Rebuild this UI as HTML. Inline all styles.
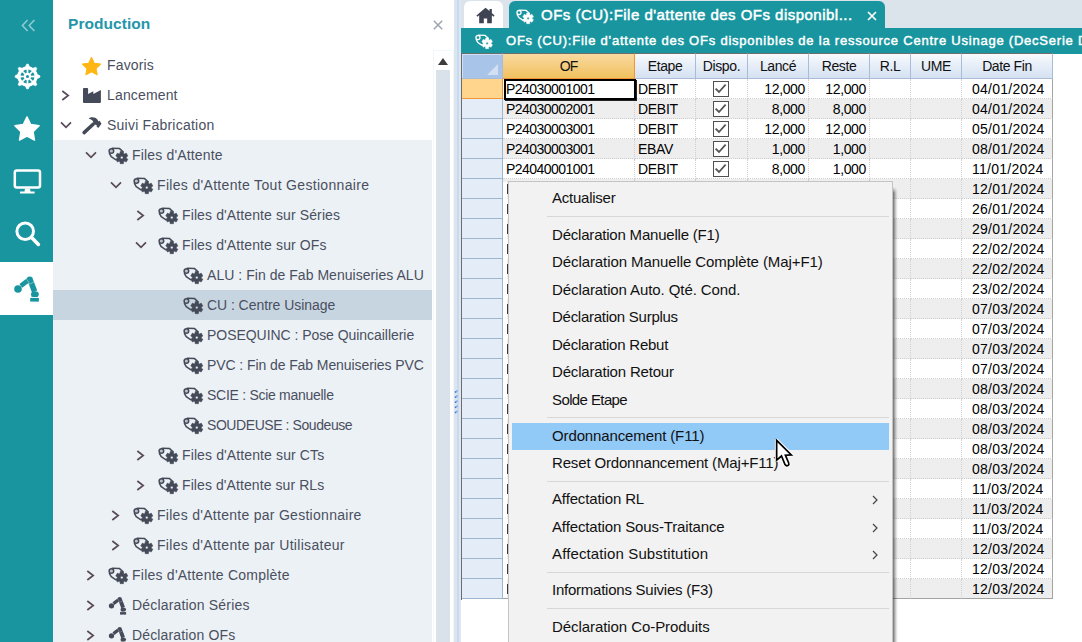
<!DOCTYPE html>
<html>
<head>
<meta charset="utf-8">
<title>Production</title>
<style>
*{box-sizing:border-box;margin:0;padding:0}
html,body{width:1082px;height:642px;overflow:hidden;background:#fff;font-family:"Liberation Sans",sans-serif}
body{position:relative}
.abs{position:absolute}
svg{position:absolute;overflow:visible}
#bar{left:0;top:0;width:53px;height:642px;background:#1995a0}
#bar .act{left:0;top:262px;width:54px;height:53px;background:#fff}
#panel{left:53px;top:0;width:401px;height:642px;background:#fff}
#ptitle{left:15px;top:15px;font-size:15.5px;font-weight:700;color:#2595a9;letter-spacing:.05px;line-height:18px}
#tree{left:0;top:50px;width:380px;height:592px}
.tr{position:absolute;left:0;width:379px;height:30px;font-size:14px;color:#4a4f5f;line-height:30px;white-space:nowrap}
.tr.sub{background:#ecf1f5}
.tr.sel{background:#c7d5e1}
.tr span{position:absolute;top:0}
#sb{left:380px;top:50px;width:21px;height:592px;background:#fff;border:1px solid #f3f6fa;border-bottom:0}
#sb .th{left:2px;top:19px;width:14px;height:572px;background:#d9e1ea}
#sb .up{left:4px;top:7px;width:0;height:0;border-left:5px solid transparent;border-right:5px solid transparent;border-bottom:7px solid #3c3c3c}
#split{left:454px;top:0;width:7px;height:642px;background:linear-gradient(90deg,#dde5ec 0,#dde5ec 3.4px,#c5daf6 3.4px,#c5daf6 5.2px,#dfe6ee 5.2px)}
#main{left:461px;top:0;width:621px;height:642px;background:#fff}
#tabs{left:0;top:0;width:621px;height:28px;background:#dbe3eb}
#home{left:3px;top:1px;width:39px;height:27px;background:#fff;border-radius:6px 6px 0 0}
#tab{left:48px;top:1px;width:376px;height:27px;background:#1995a0;border-radius:6px 6px 0 0;color:#fff;font-size:15px;font-weight:400;-webkit-text-stroke:.5px #fff;letter-spacing:.48px;line-height:27px;white-space:nowrap}
#tab span{position:absolute;left:32px;top:0}
#tbar{left:0;top:28px;width:621px;height:26px;background:#1995a0;color:#fff;font-size:13px;font-weight:400;-webkit-text-stroke:.45px #fff;letter-spacing:.775px;line-height:25px;white-space:nowrap;overflow:hidden}
#tbar span{position:absolute;left:45px;top:0}
#grid{left:0;top:53px;width:592px;height:547px;border-left:1px solid #6d6d6d}
.hd{position:absolute;top:0;height:26px;border-top:1px solid #6d6d6d;border-right:1px solid #a9bbd6;border-bottom:1px solid #a9bbd6;background:linear-gradient(#f9fbfd,#e4ecf7 55%,#d5e1f2);font-size:14px;letter-spacing:-.4px;color:#111;text-align:center;line-height:24px}
.hd.or{background:linear-gradient(#f9d99f,#f1c15f);border-bottom:1px solid #f29536;border-right:1px solid #f29536;border-top:1px solid #6d6d6d}
.hd.cn{background:#a9c4e9;box-shadow:inset 1px 1px 0 #d0dff3}
.row{position:absolute;left:41px;width:550px;height:20px;font-size:14px;color:#000;line-height:20px;white-space:nowrap}
.row.alt{background:#eeeeee}
.row i{position:absolute;top:0;height:20px;border-right:1px dotted #cfcfcf;border-bottom:1px dotted #cfcfcf;font-style:normal;overflow:hidden}
.row i.r{text-align:right}
.row i.last{border-right:1px solid #a3a3a3}
.row.end i{border-bottom:1px solid #a3a3a3}
.rh{position:absolute;left:0;width:41px;height:20px;background:#e4ecf7;border-right:1px solid #9eb6ce;border-bottom:1px solid #9eb6ce}
.rh.cur{background:#ffd58d;border-color:#f29536}
.cb{position:absolute;left:17px;top:2px;width:16px;height:16px;border:1.5px solid #505050;background:#fff}
#menu{left:508px;top:181px;width:385px;height:470px;background:#f2f2f2;border:1px solid #c4c4c4;font-size:15px;color:#111;letter-spacing:-.05px}
.mi{position:absolute;left:3px;width:377px;height:27px;line-height:26px;padding-left:40px;white-space:nowrap}
.mi.hl{background:#91c9f7}
.ms{position:absolute;left:38px;width:342px;height:1px;background:#d7d7d7}
</style>
</head>
<body>
<div id="bar" class="abs"><div class="act abs"></div>
<svg style="left:20.8px;top:19px" width="15" height="13" viewBox="0 0 15 13"><path d="M6.6 1 L1.4 6.5 L6.6 12 M13.4 1 L8.2 6.5 L13.4 12" fill="none" stroke="#8ccbd2" stroke-width="1.6"/></svg>
<svg style="left:14.8px;top:63.9px" width="25" height="25" viewBox="0 0 25 25"><g fill="none" stroke="#fff"><circle cx="12.5" cy="12.5" r="8.6" stroke-width="3.2"/><circle cx="12.5" cy="12.5" r="2.6" stroke-width="2.2"/><path d="M12.50 16.10 L12.50 21.00" stroke-width="1.7"/><path d="M10.30 22.10 L11.75 25.00 L13.25 25.00 L14.70 22.10z" fill="#fff" stroke-width=".5" stroke-linejoin="round"/><path d="M9.95 15.05 L6.49 18.51" stroke-width="1.7"/><path d="M4.16 17.73 L3.13 20.81 L4.19 21.87 L7.27 20.84z" fill="#fff" stroke-width=".5" stroke-linejoin="round"/><path d="M8.90 12.50 L4.00 12.50" stroke-width="1.7"/><path d="M2.90 10.30 L-0.00 11.75 L0.00 13.25 L2.90 14.70z" fill="#fff" stroke-width=".5" stroke-linejoin="round"/><path d="M9.95 9.95 L6.49 6.49" stroke-width="1.7"/><path d="M7.27 4.16 L4.19 3.13 L3.13 4.19 L4.16 7.27z" fill="#fff" stroke-width=".5" stroke-linejoin="round"/><path d="M12.50 8.90 L12.50 4.00" stroke-width="1.7"/><path d="M14.70 2.90 L13.25 -0.00 L11.75 0.00 L10.30 2.90z" fill="#fff" stroke-width=".5" stroke-linejoin="round"/><path d="M15.05 9.95 L18.51 6.49" stroke-width="1.7"/><path d="M20.84 7.27 L21.87 4.19 L20.81 3.13 L17.73 4.16z" fill="#fff" stroke-width=".5" stroke-linejoin="round"/><path d="M16.10 12.50 L21.00 12.50" stroke-width="1.7"/><path d="M22.10 14.70 L25.00 13.25 L25.00 11.75 L22.10 10.30z" fill="#fff" stroke-width=".5" stroke-linejoin="round"/><path d="M15.05 15.05 L18.51 18.51" stroke-width="1.7"/><path d="M17.73 20.84 L20.81 21.87 L21.87 20.81 L20.84 17.73z" fill="#fff" stroke-width=".5" stroke-linejoin="round"/></g></svg>
<svg style="left:13.4px;top:115.3px" width="28" height="28" viewBox="0 0 24 24"><path d="M12 1.6l3.2 6.6 7.2 1-5.2 5.1 1.25 7.2L12 18.1l-6.45 3.4L6.8 14.3 1.6 9.2l7.2-1z" fill="#fff" stroke="#fff" stroke-width="1.2" stroke-linejoin="round"/></svg>
<svg style="left:13px;top:168px" width="29" height="26" viewBox="0 0 29 26"><rect x="1.8" y="2.6" width="25.2" height="16.8" rx="2" fill="none" stroke="#fff" stroke-width="2.5"/><path d="M12 20.4 h5 l.5 3.2 h-6z M7 23.4 h14.6 v2 h-14.6z" fill="#fff"/></svg>
<svg style="left:14.6px;top:221.4px" width="25" height="25" viewBox="0 0 25 25"><circle cx="10.2" cy="10.2" r="8.3" fill="none" stroke="#fff" stroke-width="3"/><path d="M16.6 16.6 L23.4 23.4" stroke="#fff" stroke-width="3.6" stroke-linecap="round"/></svg>
<svg style="left:13px;top:275px" width="27.0" height="27.0" viewBox="0 0 27 27">
<circle cx="5" cy="14" r="3.8" fill="#1995a0"/>
<path d="M7.8 10.9 L16 4.7" stroke="#1995a0" stroke-width="4.6" fill="none"/>
<circle cx="16.8" cy="4.7" r="3.1" fill="#1995a0"/>
<path d="M17.4 5.6 L21.6 16.6" stroke="#1995a0" stroke-width="5.6" fill="none"/>
<ellipse cx="21.9" cy="19.2" rx="3.9" ry="2.9" fill="#1995a0"/>
<rect x="17.2" y="23" width="8.7" height="3.6" fill="#1995a0"/>
<rect x="18.2" y="20.6" width="6.8" height="1.6" fill="#1995a0" opacity=".55"/>
<path d="M13.2 3.4 L16.6 8.6 M16.4 9.4 L21.4 6.6" stroke="#fff" stroke-width=".7" opacity=".55" fill="none"/>
</svg>
</div>
<div id="panel" class="abs">
<div id="ptitle" class="abs">Production</div>
<svg style="left:380px;top:20px" width="10" height="10" viewBox="0 0 10 10"><path d="M.8 .8 L9.2 9.2 M9.2 .8 L.8 9.2" stroke="#9da5b0" stroke-width="1.5" fill="none"/></svg>
<div id="tree" class="abs">
<div class="tr " style="top:0px"><svg style="left:28.4px;top:5.6px" width="21" height="21" viewBox="0 0 24 24"><path d="M12 1.6l3.2 6.6 7.2 1-5.2 5.1 1.25 7.2L12 18.1l-6.45 3.4L6.8 14.3 1.6 9.2l7.2-1z" fill="#ffb612" stroke="#ffb612" stroke-width="1.2" stroke-linejoin="round"/></svg><span style="left:54px;letter-spacing:0.149px">Favoris</span></div>
<div class="tr " style="top:30px"><svg style="left:8px;top:9.5px" width="9" height="11" viewBox="0 0 9 11"><path d="M1.3 1.0 L7.2 5.5 L1.3 10.0" fill="none" stroke="#5a4a5a" stroke-width="1.7"/></svg><svg style="left:29.7px;top:7.8px" width="18" height="15" viewBox="0 0 18 15"><path d="M0 .9 Q0 0 .9 0 H4.2 Q5.1 0 5.1 .9 V6 L10.3 3.3 V5.9 L17.9 2 V14 Q17.9 15 16.9 15 H1 Q0 15 0 14z" fill="#454a58"/></svg><span style="left:54px;letter-spacing:0.152px">Lancement</span></div>
<div class="tr " style="top:60px"><svg style="left:7px;top:10.5px" width="12" height="8" viewBox="0 0 12 8"><path d="M1 1.3 L6 6.4 L11 1.3" fill="none" stroke="#5a4a5a" stroke-width="1.7"/></svg><svg style="left:28.8px;top:6.8px" width="20" height="18" viewBox="0 0 20 18"><path d="M6.6 1.4 C9 -0.5 13.2 -0.3 15.4 2.4 L16.5 4.4 L17.6 3.8 L19.5 6.7 L16.3 10.9 L14.4 9.2 L14.9 8 L13.3 7.8 L11.4 5.7 C11.5 3.9 9.6 2 6.6 1.4z" fill="#454a58"/><path d="M11.4 7 L2.1 15.6" stroke="#454a58" stroke-width="3.5" stroke-linecap="round"/></svg><span style="left:54px;letter-spacing:0.231px">Suivi Fabrication</span></div>
<div class="tr sub" style="top:90px"><svg style="left:32px;top:10.5px" width="12" height="8" viewBox="0 0 12 8"><path d="M1 1.3 L6 6.4 L11 1.3" fill="none" stroke="#5a4a5a" stroke-width="1.7"/></svg><svg style="left:55px;top:6.5px" width="21.0" height="17.5" viewBox="0 0 21 17.5">
<g fill="none" stroke="#454a58" stroke-width="1.5" stroke-linecap="round" stroke-linejoin="round">
<circle cx="3.4" cy="4" r="2.3" fill="#b9c0ca"/><path d="M4.2 1.2 L11.6 1.6 L14.8 4.6"/><path d="M1.4 6.4 L3.2 9.6 L7.6 12.6"/></g>
<path fill="#454a58" fill-rule="evenodd" stroke="#454a58" stroke-width=".5" stroke-linejoin="round" d="M12.01 6.36 L12.12 4.53 L15.48 4.53 L15.59 6.36 L16.57 6.93 L18.22 6.11 L19.90 9.02 L18.36 10.03 L18.36 11.17 L19.90 12.18 L18.22 15.09 L16.57 14.27 L15.59 14.84 L15.48 16.67 L12.12 16.67 L12.01 14.84 L11.03 14.27 L9.38 15.09 L7.70 12.18 L9.24 11.17 L9.24 10.03 L7.70 9.02 L9.38 6.11 L11.03 6.93z M12.45 10.60 a1.35 1.35 0 1 0 2.7 0 a1.35 1.35 0 1 0 -2.7 0z"/>
</svg><span style="left:79px;letter-spacing:0.166px">Files d'Attente</span></div>
<div class="tr sub" style="top:120px"><svg style="left:57px;top:10.5px" width="12" height="8" viewBox="0 0 12 8"><path d="M1 1.3 L6 6.4 L11 1.3" fill="none" stroke="#5a4a5a" stroke-width="1.7"/></svg><svg style="left:80px;top:6.5px" width="21.0" height="17.5" viewBox="0 0 21 17.5">
<g fill="none" stroke="#454a58" stroke-width="1.5" stroke-linecap="round" stroke-linejoin="round">
<circle cx="3.4" cy="4" r="2.3" fill="#b9c0ca"/><path d="M4.2 1.2 L11.6 1.6 L14.8 4.6"/><path d="M1.4 6.4 L3.2 9.6 L7.6 12.6"/></g>
<path fill="#454a58" fill-rule="evenodd" stroke="#454a58" stroke-width=".5" stroke-linejoin="round" d="M12.01 6.36 L12.12 4.53 L15.48 4.53 L15.59 6.36 L16.57 6.93 L18.22 6.11 L19.90 9.02 L18.36 10.03 L18.36 11.17 L19.90 12.18 L18.22 15.09 L16.57 14.27 L15.59 14.84 L15.48 16.67 L12.12 16.67 L12.01 14.84 L11.03 14.27 L9.38 15.09 L7.70 12.18 L9.24 11.17 L9.24 10.03 L7.70 9.02 L9.38 6.11 L11.03 6.93z M12.45 10.60 a1.35 1.35 0 1 0 2.7 0 a1.35 1.35 0 1 0 -2.7 0z"/>
</svg><span style="left:104px;letter-spacing:0.324px">Files d'Attente Tout Gestionnaire</span></div>
<div class="tr sub" style="top:150px"><svg style="left:83px;top:9.5px" width="9" height="11" viewBox="0 0 9 11"><path d="M1.3 1.0 L7.2 5.5 L1.3 10.0" fill="none" stroke="#5a4a5a" stroke-width="1.7"/></svg><svg style="left:105px;top:6.5px" width="21.0" height="17.5" viewBox="0 0 21 17.5">
<g fill="none" stroke="#454a58" stroke-width="1.5" stroke-linecap="round" stroke-linejoin="round">
<circle cx="3.4" cy="4" r="2.3" fill="#b9c0ca"/><path d="M4.2 1.2 L11.6 1.6 L14.8 4.6"/><path d="M1.4 6.4 L3.2 9.6 L7.6 12.6"/></g>
<path fill="#454a58" fill-rule="evenodd" stroke="#454a58" stroke-width=".5" stroke-linejoin="round" d="M12.01 6.36 L12.12 4.53 L15.48 4.53 L15.59 6.36 L16.57 6.93 L18.22 6.11 L19.90 9.02 L18.36 10.03 L18.36 11.17 L19.90 12.18 L18.22 15.09 L16.57 14.27 L15.59 14.84 L15.48 16.67 L12.12 16.67 L12.01 14.84 L11.03 14.27 L9.38 15.09 L7.70 12.18 L9.24 11.17 L9.24 10.03 L7.70 9.02 L9.38 6.11 L11.03 6.93z M12.45 10.60 a1.35 1.35 0 1 0 2.7 0 a1.35 1.35 0 1 0 -2.7 0z"/>
</svg><span style="left:129px;letter-spacing:0.113px">Files d'Attente sur Séries</span></div>
<div class="tr sub" style="top:180px"><svg style="left:82px;top:10.5px" width="12" height="8" viewBox="0 0 12 8"><path d="M1 1.3 L6 6.4 L11 1.3" fill="none" stroke="#5a4a5a" stroke-width="1.7"/></svg><svg style="left:105px;top:6.5px" width="21.0" height="17.5" viewBox="0 0 21 17.5">
<g fill="none" stroke="#454a58" stroke-width="1.5" stroke-linecap="round" stroke-linejoin="round">
<circle cx="3.4" cy="4" r="2.3" fill="#b9c0ca"/><path d="M4.2 1.2 L11.6 1.6 L14.8 4.6"/><path d="M1.4 6.4 L3.2 9.6 L7.6 12.6"/></g>
<path fill="#454a58" fill-rule="evenodd" stroke="#454a58" stroke-width=".5" stroke-linejoin="round" d="M12.01 6.36 L12.12 4.53 L15.48 4.53 L15.59 6.36 L16.57 6.93 L18.22 6.11 L19.90 9.02 L18.36 10.03 L18.36 11.17 L19.90 12.18 L18.22 15.09 L16.57 14.27 L15.59 14.84 L15.48 16.67 L12.12 16.67 L12.01 14.84 L11.03 14.27 L9.38 15.09 L7.70 12.18 L9.24 11.17 L9.24 10.03 L7.70 9.02 L9.38 6.11 L11.03 6.93z M12.45 10.60 a1.35 1.35 0 1 0 2.7 0 a1.35 1.35 0 1 0 -2.7 0z"/>
</svg><span style="left:129px;letter-spacing:0.116px">Files d'Attente sur OFs</span></div>
<div class="tr sub" style="top:210px"><svg style="left:130px;top:6.5px" width="21.0" height="17.5" viewBox="0 0 21 17.5">
<g fill="none" stroke="#454a58" stroke-width="1.5" stroke-linecap="round" stroke-linejoin="round">
<circle cx="3.4" cy="4" r="2.3" fill="#b9c0ca"/><path d="M4.2 1.2 L11.6 1.6 L14.8 4.6"/><path d="M1.4 6.4 L3.2 9.6 L7.6 12.6"/></g>
<path fill="#454a58" fill-rule="evenodd" stroke="#454a58" stroke-width=".5" stroke-linejoin="round" d="M12.01 6.36 L12.12 4.53 L15.48 4.53 L15.59 6.36 L16.57 6.93 L18.22 6.11 L19.90 9.02 L18.36 10.03 L18.36 11.17 L19.90 12.18 L18.22 15.09 L16.57 14.27 L15.59 14.84 L15.48 16.67 L12.12 16.67 L12.01 14.84 L11.03 14.27 L9.38 15.09 L7.70 12.18 L9.24 11.17 L9.24 10.03 L7.70 9.02 L9.38 6.11 L11.03 6.93z M12.45 10.60 a1.35 1.35 0 1 0 2.7 0 a1.35 1.35 0 1 0 -2.7 0z"/>
</svg><span style="left:154px;letter-spacing:0.04px">ALU : Fin de Fab Menuiseries ALU</span></div>
<div class="tr sel" style="top:240px"><svg style="left:130px;top:6.5px" width="21.0" height="17.5" viewBox="0 0 21 17.5">
<g fill="none" stroke="#454a58" stroke-width="1.5" stroke-linecap="round" stroke-linejoin="round">
<circle cx="3.4" cy="4" r="2.3" fill="#b9c0ca"/><path d="M4.2 1.2 L11.6 1.6 L14.8 4.6"/><path d="M1.4 6.4 L3.2 9.6 L7.6 12.6"/></g>
<path fill="#454a58" fill-rule="evenodd" stroke="#454a58" stroke-width=".5" stroke-linejoin="round" d="M12.01 6.36 L12.12 4.53 L15.48 4.53 L15.59 6.36 L16.57 6.93 L18.22 6.11 L19.90 9.02 L18.36 10.03 L18.36 11.17 L19.90 12.18 L18.22 15.09 L16.57 14.27 L15.59 14.84 L15.48 16.67 L12.12 16.67 L12.01 14.84 L11.03 14.27 L9.38 15.09 L7.70 12.18 L9.24 11.17 L9.24 10.03 L7.70 9.02 L9.38 6.11 L11.03 6.93z M12.45 10.60 a1.35 1.35 0 1 0 2.7 0 a1.35 1.35 0 1 0 -2.7 0z"/>
</svg><span style="left:154px;letter-spacing:-0.054px">CU : Centre Usinage</span></div>
<div class="tr sub" style="top:270px"><svg style="left:130px;top:6.5px" width="21.0" height="17.5" viewBox="0 0 21 17.5">
<g fill="none" stroke="#454a58" stroke-width="1.5" stroke-linecap="round" stroke-linejoin="round">
<circle cx="3.4" cy="4" r="2.3" fill="#b9c0ca"/><path d="M4.2 1.2 L11.6 1.6 L14.8 4.6"/><path d="M1.4 6.4 L3.2 9.6 L7.6 12.6"/></g>
<path fill="#454a58" fill-rule="evenodd" stroke="#454a58" stroke-width=".5" stroke-linejoin="round" d="M12.01 6.36 L12.12 4.53 L15.48 4.53 L15.59 6.36 L16.57 6.93 L18.22 6.11 L19.90 9.02 L18.36 10.03 L18.36 11.17 L19.90 12.18 L18.22 15.09 L16.57 14.27 L15.59 14.84 L15.48 16.67 L12.12 16.67 L12.01 14.84 L11.03 14.27 L9.38 15.09 L7.70 12.18 L9.24 11.17 L9.24 10.03 L7.70 9.02 L9.38 6.11 L11.03 6.93z M12.45 10.60 a1.35 1.35 0 1 0 2.7 0 a1.35 1.35 0 1 0 -2.7 0z"/>
</svg><span style="left:154px;letter-spacing:-0.046px">POSEQUINC : Pose Quincaillerie</span></div>
<div class="tr sub" style="top:300px"><svg style="left:130px;top:6.5px" width="21.0" height="17.5" viewBox="0 0 21 17.5">
<g fill="none" stroke="#454a58" stroke-width="1.5" stroke-linecap="round" stroke-linejoin="round">
<circle cx="3.4" cy="4" r="2.3" fill="#b9c0ca"/><path d="M4.2 1.2 L11.6 1.6 L14.8 4.6"/><path d="M1.4 6.4 L3.2 9.6 L7.6 12.6"/></g>
<path fill="#454a58" fill-rule="evenodd" stroke="#454a58" stroke-width=".5" stroke-linejoin="round" d="M12.01 6.36 L12.12 4.53 L15.48 4.53 L15.59 6.36 L16.57 6.93 L18.22 6.11 L19.90 9.02 L18.36 10.03 L18.36 11.17 L19.90 12.18 L18.22 15.09 L16.57 14.27 L15.59 14.84 L15.48 16.67 L12.12 16.67 L12.01 14.84 L11.03 14.27 L9.38 15.09 L7.70 12.18 L9.24 11.17 L9.24 10.03 L7.70 9.02 L9.38 6.11 L11.03 6.93z M12.45 10.60 a1.35 1.35 0 1 0 2.7 0 a1.35 1.35 0 1 0 -2.7 0z"/>
</svg><span style="left:154px;letter-spacing:-0.085px">PVC : Fin de Fab Menuiseries PVC</span></div>
<div class="tr sub" style="top:330px"><svg style="left:130px;top:6.5px" width="21.0" height="17.5" viewBox="0 0 21 17.5">
<g fill="none" stroke="#454a58" stroke-width="1.5" stroke-linecap="round" stroke-linejoin="round">
<circle cx="3.4" cy="4" r="2.3" fill="#b9c0ca"/><path d="M4.2 1.2 L11.6 1.6 L14.8 4.6"/><path d="M1.4 6.4 L3.2 9.6 L7.6 12.6"/></g>
<path fill="#454a58" fill-rule="evenodd" stroke="#454a58" stroke-width=".5" stroke-linejoin="round" d="M12.01 6.36 L12.12 4.53 L15.48 4.53 L15.59 6.36 L16.57 6.93 L18.22 6.11 L19.90 9.02 L18.36 10.03 L18.36 11.17 L19.90 12.18 L18.22 15.09 L16.57 14.27 L15.59 14.84 L15.48 16.67 L12.12 16.67 L12.01 14.84 L11.03 14.27 L9.38 15.09 L7.70 12.18 L9.24 11.17 L9.24 10.03 L7.70 9.02 L9.38 6.11 L11.03 6.93z M12.45 10.60 a1.35 1.35 0 1 0 2.7 0 a1.35 1.35 0 1 0 -2.7 0z"/>
</svg><span style="left:154px;letter-spacing:-0.279px">SCIE : Scie manuelle</span></div>
<div class="tr sub" style="top:360px"><svg style="left:130px;top:6.5px" width="21.0" height="17.5" viewBox="0 0 21 17.5">
<g fill="none" stroke="#454a58" stroke-width="1.5" stroke-linecap="round" stroke-linejoin="round">
<circle cx="3.4" cy="4" r="2.3" fill="#b9c0ca"/><path d="M4.2 1.2 L11.6 1.6 L14.8 4.6"/><path d="M1.4 6.4 L3.2 9.6 L7.6 12.6"/></g>
<path fill="#454a58" fill-rule="evenodd" stroke="#454a58" stroke-width=".5" stroke-linejoin="round" d="M12.01 6.36 L12.12 4.53 L15.48 4.53 L15.59 6.36 L16.57 6.93 L18.22 6.11 L19.90 9.02 L18.36 10.03 L18.36 11.17 L19.90 12.18 L18.22 15.09 L16.57 14.27 L15.59 14.84 L15.48 16.67 L12.12 16.67 L12.01 14.84 L11.03 14.27 L9.38 15.09 L7.70 12.18 L9.24 11.17 L9.24 10.03 L7.70 9.02 L9.38 6.11 L11.03 6.93z M12.45 10.60 a1.35 1.35 0 1 0 2.7 0 a1.35 1.35 0 1 0 -2.7 0z"/>
</svg><span style="left:154px;letter-spacing:-0.428px">SOUDEUSE : Soudeuse</span></div>
<div class="tr sub" style="top:390px"><svg style="left:83px;top:9.5px" width="9" height="11" viewBox="0 0 9 11"><path d="M1.3 1.0 L7.2 5.5 L1.3 10.0" fill="none" stroke="#5a4a5a" stroke-width="1.7"/></svg><svg style="left:105px;top:6.5px" width="21.0" height="17.5" viewBox="0 0 21 17.5">
<g fill="none" stroke="#454a58" stroke-width="1.5" stroke-linecap="round" stroke-linejoin="round">
<circle cx="3.4" cy="4" r="2.3" fill="#b9c0ca"/><path d="M4.2 1.2 L11.6 1.6 L14.8 4.6"/><path d="M1.4 6.4 L3.2 9.6 L7.6 12.6"/></g>
<path fill="#454a58" fill-rule="evenodd" stroke="#454a58" stroke-width=".5" stroke-linejoin="round" d="M12.01 6.36 L12.12 4.53 L15.48 4.53 L15.59 6.36 L16.57 6.93 L18.22 6.11 L19.90 9.02 L18.36 10.03 L18.36 11.17 L19.90 12.18 L18.22 15.09 L16.57 14.27 L15.59 14.84 L15.48 16.67 L12.12 16.67 L12.01 14.84 L11.03 14.27 L9.38 15.09 L7.70 12.18 L9.24 11.17 L9.24 10.03 L7.70 9.02 L9.38 6.11 L11.03 6.93z M12.45 10.60 a1.35 1.35 0 1 0 2.7 0 a1.35 1.35 0 1 0 -2.7 0z"/>
</svg><span style="left:129px;letter-spacing:0.117px">Files d'Attente sur CTs</span></div>
<div class="tr sub" style="top:420px"><svg style="left:83px;top:9.5px" width="9" height="11" viewBox="0 0 9 11"><path d="M1.3 1.0 L7.2 5.5 L1.3 10.0" fill="none" stroke="#5a4a5a" stroke-width="1.7"/></svg><svg style="left:105px;top:6.5px" width="21.0" height="17.5" viewBox="0 0 21 17.5">
<g fill="none" stroke="#454a58" stroke-width="1.5" stroke-linecap="round" stroke-linejoin="round">
<circle cx="3.4" cy="4" r="2.3" fill="#b9c0ca"/><path d="M4.2 1.2 L11.6 1.6 L14.8 4.6"/><path d="M1.4 6.4 L3.2 9.6 L7.6 12.6"/></g>
<path fill="#454a58" fill-rule="evenodd" stroke="#454a58" stroke-width=".5" stroke-linejoin="round" d="M12.01 6.36 L12.12 4.53 L15.48 4.53 L15.59 6.36 L16.57 6.93 L18.22 6.11 L19.90 9.02 L18.36 10.03 L18.36 11.17 L19.90 12.18 L18.22 15.09 L16.57 14.27 L15.59 14.84 L15.48 16.67 L12.12 16.67 L12.01 14.84 L11.03 14.27 L9.38 15.09 L7.70 12.18 L9.24 11.17 L9.24 10.03 L7.70 9.02 L9.38 6.11 L11.03 6.93z M12.45 10.60 a1.35 1.35 0 1 0 2.7 0 a1.35 1.35 0 1 0 -2.7 0z"/>
</svg><span style="left:129px;letter-spacing:0.082px">Files d'Attente sur RLs</span></div>
<div class="tr sub" style="top:450px"><svg style="left:58px;top:9.5px" width="9" height="11" viewBox="0 0 9 11"><path d="M1.3 1.0 L7.2 5.5 L1.3 10.0" fill="none" stroke="#5a4a5a" stroke-width="1.7"/></svg><svg style="left:80px;top:6.5px" width="21.0" height="17.5" viewBox="0 0 21 17.5">
<g fill="none" stroke="#454a58" stroke-width="1.5" stroke-linecap="round" stroke-linejoin="round">
<circle cx="3.4" cy="4" r="2.3" fill="#b9c0ca"/><path d="M4.2 1.2 L11.6 1.6 L14.8 4.6"/><path d="M1.4 6.4 L3.2 9.6 L7.6 12.6"/></g>
<path fill="#454a58" fill-rule="evenodd" stroke="#454a58" stroke-width=".5" stroke-linejoin="round" d="M12.01 6.36 L12.12 4.53 L15.48 4.53 L15.59 6.36 L16.57 6.93 L18.22 6.11 L19.90 9.02 L18.36 10.03 L18.36 11.17 L19.90 12.18 L18.22 15.09 L16.57 14.27 L15.59 14.84 L15.48 16.67 L12.12 16.67 L12.01 14.84 L11.03 14.27 L9.38 15.09 L7.70 12.18 L9.24 11.17 L9.24 10.03 L7.70 9.02 L9.38 6.11 L11.03 6.93z M12.45 10.60 a1.35 1.35 0 1 0 2.7 0 a1.35 1.35 0 1 0 -2.7 0z"/>
</svg><span style="left:104px;letter-spacing:0.282px">Files d'Attente par Gestionnaire</span></div>
<div class="tr sub" style="top:480px"><svg style="left:58px;top:9.5px" width="9" height="11" viewBox="0 0 9 11"><path d="M1.3 1.0 L7.2 5.5 L1.3 10.0" fill="none" stroke="#5a4a5a" stroke-width="1.7"/></svg><svg style="left:80px;top:6.5px" width="21.0" height="17.5" viewBox="0 0 21 17.5">
<g fill="none" stroke="#454a58" stroke-width="1.5" stroke-linecap="round" stroke-linejoin="round">
<circle cx="3.4" cy="4" r="2.3" fill="#b9c0ca"/><path d="M4.2 1.2 L11.6 1.6 L14.8 4.6"/><path d="M1.4 6.4 L3.2 9.6 L7.6 12.6"/></g>
<path fill="#454a58" fill-rule="evenodd" stroke="#454a58" stroke-width=".5" stroke-linejoin="round" d="M12.01 6.36 L12.12 4.53 L15.48 4.53 L15.59 6.36 L16.57 6.93 L18.22 6.11 L19.90 9.02 L18.36 10.03 L18.36 11.17 L19.90 12.18 L18.22 15.09 L16.57 14.27 L15.59 14.84 L15.48 16.67 L12.12 16.67 L12.01 14.84 L11.03 14.27 L9.38 15.09 L7.70 12.18 L9.24 11.17 L9.24 10.03 L7.70 9.02 L9.38 6.11 L11.03 6.93z M12.45 10.60 a1.35 1.35 0 1 0 2.7 0 a1.35 1.35 0 1 0 -2.7 0z"/>
</svg><span style="left:104px;letter-spacing:0.299px">Files d'Attente par Utilisateur</span></div>
<div class="tr sub" style="top:510px"><svg style="left:33px;top:9.5px" width="9" height="11" viewBox="0 0 9 11"><path d="M1.3 1.0 L7.2 5.5 L1.3 10.0" fill="none" stroke="#5a4a5a" stroke-width="1.7"/></svg><svg style="left:55px;top:6.5px" width="21.0" height="17.5" viewBox="0 0 21 17.5">
<g fill="none" stroke="#454a58" stroke-width="1.5" stroke-linecap="round" stroke-linejoin="round">
<circle cx="3.4" cy="4" r="2.3" fill="#b9c0ca"/><path d="M4.2 1.2 L11.6 1.6 L14.8 4.6"/><path d="M1.4 6.4 L3.2 9.6 L7.6 12.6"/></g>
<path fill="#454a58" fill-rule="evenodd" stroke="#454a58" stroke-width=".5" stroke-linejoin="round" d="M12.01 6.36 L12.12 4.53 L15.48 4.53 L15.59 6.36 L16.57 6.93 L18.22 6.11 L19.90 9.02 L18.36 10.03 L18.36 11.17 L19.90 12.18 L18.22 15.09 L16.57 14.27 L15.59 14.84 L15.48 16.67 L12.12 16.67 L12.01 14.84 L11.03 14.27 L9.38 15.09 L7.70 12.18 L9.24 11.17 L9.24 10.03 L7.70 9.02 L9.38 6.11 L11.03 6.93z M12.45 10.60 a1.35 1.35 0 1 0 2.7 0 a1.35 1.35 0 1 0 -2.7 0z"/>
</svg><span style="left:79px;letter-spacing:0.235px">Files d'Attente Complète</span></div>
<div class="tr sub" style="top:540px"><svg style="left:33px;top:9.5px" width="9" height="11" viewBox="0 0 9 11"><path d="M1.3 1.0 L7.2 5.5 L1.3 10.0" fill="none" stroke="#5a4a5a" stroke-width="1.7"/></svg><svg style="left:55px;top:5.8px" width="18.9" height="18.9" viewBox="0 0 27 27">
<circle cx="5" cy="14" r="3.8" fill="#454a58"/>
<path d="M7.8 10.9 L16 4.7" stroke="#454a58" stroke-width="4.6" fill="none"/>
<circle cx="16.8" cy="4.7" r="3.1" fill="#454a58"/>
<path d="M17.4 5.6 L21.6 16.6" stroke="#454a58" stroke-width="5.6" fill="none"/>
<ellipse cx="21.9" cy="19.2" rx="3.9" ry="2.9" fill="#454a58"/>
<rect x="17.2" y="23" width="8.7" height="3.6" fill="#454a58"/>
<rect x="18.2" y="20.6" width="6.8" height="1.6" fill="#454a58" opacity=".55"/>
<path d="M13.2 3.4 L16.6 8.6 M16.4 9.4 L21.4 6.6" stroke="#ecf1f5" stroke-width=".7" opacity=".55" fill="none"/>
</svg><span style="left:79px;letter-spacing:0.177px">Déclaration Séries</span></div>
<div class="tr sub" style="top:570px"><svg style="left:33px;top:9.5px" width="9" height="11" viewBox="0 0 9 11"><path d="M1.3 1.0 L7.2 5.5 L1.3 10.0" fill="none" stroke="#5a4a5a" stroke-width="1.7"/></svg><svg style="left:55px;top:5.8px" width="18.9" height="18.9" viewBox="0 0 27 27">
<circle cx="5" cy="14" r="3.8" fill="#454a58"/>
<path d="M7.8 10.9 L16 4.7" stroke="#454a58" stroke-width="4.6" fill="none"/>
<circle cx="16.8" cy="4.7" r="3.1" fill="#454a58"/>
<path d="M17.4 5.6 L21.6 16.6" stroke="#454a58" stroke-width="5.6" fill="none"/>
<ellipse cx="21.9" cy="19.2" rx="3.9" ry="2.9" fill="#454a58"/>
<rect x="17.2" y="23" width="8.7" height="3.6" fill="#454a58"/>
<rect x="18.2" y="20.6" width="6.8" height="1.6" fill="#454a58" opacity=".55"/>
<path d="M13.2 3.4 L16.6 8.6 M16.4 9.4 L21.4 6.6" stroke="#ecf1f5" stroke-width=".7" opacity=".55" fill="none"/>
</svg><span style="left:79px;letter-spacing:0.153px">Déclaration OFs</span></div>
</div>
<div id="sb" class="abs"><div class="up abs"></div><div class="th abs"></div></div>
</div>
<div id="split" class="abs">
<svg style="left:0px;top:389px" width="5" height="26" viewBox="0 0 5 26"><rect x="0.8" y="2.2" width="1.6" height="1.6" fill="#3f72d2"/><rect x="2.2" y="1.2" width="1.6" height="1.5" fill="#7ea1e6"/><rect x="0.8" y="7.3" width="1.6" height="1.6" fill="#3f72d2"/><rect x="2.2" y="6.3" width="1.6" height="1.5" fill="#7ea1e6"/><rect x="0.8" y="12.4" width="1.6" height="1.6" fill="#3f72d2"/><rect x="2.2" y="11.4" width="1.6" height="1.5" fill="#7ea1e6"/><rect x="0.8" y="17.5" width="1.6" height="1.6" fill="#3f72d2"/><rect x="2.2" y="16.5" width="1.6" height="1.5" fill="#7ea1e6"/><rect x="0.8" y="22.6" width="1.6" height="1.6" fill="#3f72d2"/><rect x="2.2" y="21.6" width="1.6" height="1.5" fill="#7ea1e6"/></svg>
</div>
<div id="main" class="abs">
<div id="tabs" class="abs"><div id="home" class="abs">
<svg style="left:11.5px;top:5.6px" width="19" height="17" viewBox="0 0 18 16"><path d="M9 .6 L.4 8 l1 1.1 L3 7.8 V15.4 h4.4 v-4.6 h3.2 v4.6 H15 V7.8 l1.6 1.3 1-1.1 -2.6-2.3 V1.8 h-2.2 v2z" fill="#3f4452"/></svg>
</div><div id="tab" class="abs"><svg style="left:7px;top:8px" width="18.48" height="15.4" viewBox="0 0 21 17.5">
<g fill="none" stroke="#fff" stroke-width="1.5" stroke-linecap="round" stroke-linejoin="round">
<circle cx="3.4" cy="4" r="2.3" fill="none"/><path d="M4.2 1.2 L11.6 1.6 L14.8 4.6"/><path d="M1.4 6.4 L3.2 9.6 L7.6 12.6"/></g>
<path fill="#fff" fill-rule="evenodd" stroke="#fff" stroke-width=".5" stroke-linejoin="round" d="M12.01 6.36 L12.12 4.53 L15.48 4.53 L15.59 6.36 L16.57 6.93 L18.22 6.11 L19.90 9.02 L18.36 10.03 L18.36 11.17 L19.90 12.18 L18.22 15.09 L16.57 14.27 L15.59 14.84 L15.48 16.67 L12.12 16.67 L12.01 14.84 L11.03 14.27 L9.38 15.09 L7.70 12.18 L9.24 11.17 L9.24 10.03 L7.70 9.02 L9.38 6.11 L11.03 6.93z M12.45 10.60 a1.35 1.35 0 1 0 2.7 0 a1.35 1.35 0 1 0 -2.7 0z"/>
</svg><span>OFs (CU):File d'attente des OFs disponibl...</span>
<svg style="left:358px;top:10px" width="10" height="10" viewBox="0 0 10 10"><path d="M1 1 L9 9 M9 1 L1 9" stroke="#fff" stroke-width="1.7" fill="none"/></svg>
</div></div>
<div id="tbar" class="abs"><svg style="left:14px;top:5.9px" width="18.48" height="15.4" viewBox="0 0 21 17.5">
<g fill="none" stroke="#fff" stroke-width="1.5" stroke-linecap="round" stroke-linejoin="round">
<circle cx="3.4" cy="4" r="2.3" fill="none"/><path d="M4.2 1.2 L11.6 1.6 L14.8 4.6"/><path d="M1.4 6.4 L3.2 9.6 L7.6 12.6"/></g>
<path fill="#fff" fill-rule="evenodd" stroke="#fff" stroke-width=".5" stroke-linejoin="round" d="M12.01 6.36 L12.12 4.53 L15.48 4.53 L15.59 6.36 L16.57 6.93 L18.22 6.11 L19.90 9.02 L18.36 10.03 L18.36 11.17 L19.90 12.18 L18.22 15.09 L16.57 14.27 L15.59 14.84 L15.48 16.67 L12.12 16.67 L12.01 14.84 L11.03 14.27 L9.38 15.09 L7.70 12.18 L9.24 11.17 L9.24 10.03 L7.70 9.02 L9.38 6.11 L11.03 6.93z M12.45 10.60 a1.35 1.35 0 1 0 2.7 0 a1.35 1.35 0 1 0 -2.7 0z"/>
</svg><span>OFs (CU):File d'attente des OFs disponibles de la ressource Centre Usinage (DecSerie Déclaration)</span></div>
<div id="grid" class="abs">
<div class="hd cn" style="left:0px;width:41px"><svg style="left:25px;top:10px" width="11" height="11" viewBox="0 0 11 11"><path d="M11 0 V11 H0z" fill="#d3e0f3"/></svg></div>
<div class="hd or" style="left:41px;width:132px;letter-spacing:-1px">OF</div>
<div class="hd " style="left:173px;width:61px">Etape</div>
<div class="hd " style="left:234px;width:52px">Dispo.</div>
<div class="hd " style="left:286px;width:61px">Lancé</div>
<div class="hd " style="left:347px;width:61px">Reste</div>
<div class="hd " style="left:408px;width:41px">R.L</div>
<div class="hd " style="left:449px;width:51px">UME</div>
<div class="hd " style="left:500px;width:91px">Date Fin</div>
<div class="rh cur" style="top:26px"></div>
<div class="row" style="top:26px"><i style="left:0px;width:132px;padding-left:3px;letter-spacing:-.55px;">P24030001001</i><i style="left:132px;width:61px;padding-left:3px;letter-spacing:-.3px;">DEBIT</i><i style="left:193px;width:52px;"><span class="cb"><svg style="left:0;top:0" width="13" height="13" viewBox="0 0 13 13"><path d="M1.6 6.6 L5 10 L11.6 2.6" fill="none" stroke="#555" stroke-width="1.8"/></svg></span></i><i class="r" style="left:245px;width:61px;padding-right:3px;letter-spacing:-.35px;">12,000</i><i class="r" style="left:306px;width:61px;padding-right:3px;letter-spacing:-.35px;">12,000</i><i style="left:367px;width:41px;"></i><i style="left:408px;width:51px;"></i><i class="last" style="left:459px;width:91px;padding-left:10px;letter-spacing:.25px;">04/01/2024</i></div>
<div class="rh" style="top:46px"></div>
<div class="row alt" style="top:46px"><i style="left:0px;width:132px;padding-left:3px;letter-spacing:-.55px;">P24030002001</i><i style="left:132px;width:61px;padding-left:3px;letter-spacing:-.3px;">DEBIT</i><i style="left:193px;width:52px;"><span class="cb"><svg style="left:0;top:0" width="13" height="13" viewBox="0 0 13 13"><path d="M1.6 6.6 L5 10 L11.6 2.6" fill="none" stroke="#555" stroke-width="1.8"/></svg></span></i><i class="r" style="left:245px;width:61px;padding-right:3px;letter-spacing:-.35px;">8,000</i><i class="r" style="left:306px;width:61px;padding-right:3px;letter-spacing:-.35px;">8,000</i><i style="left:367px;width:41px;"></i><i style="left:408px;width:51px;"></i><i class="last" style="left:459px;width:91px;padding-left:10px;letter-spacing:.25px;">04/01/2024</i></div>
<div class="rh" style="top:66px"></div>
<div class="row" style="top:66px"><i style="left:0px;width:132px;padding-left:3px;letter-spacing:-.55px;">P24030003001</i><i style="left:132px;width:61px;padding-left:3px;letter-spacing:-.3px;">DEBIT</i><i style="left:193px;width:52px;"><span class="cb"><svg style="left:0;top:0" width="13" height="13" viewBox="0 0 13 13"><path d="M1.6 6.6 L5 10 L11.6 2.6" fill="none" stroke="#555" stroke-width="1.8"/></svg></span></i><i class="r" style="left:245px;width:61px;padding-right:3px;letter-spacing:-.35px;">12,000</i><i class="r" style="left:306px;width:61px;padding-right:3px;letter-spacing:-.35px;">12,000</i><i style="left:367px;width:41px;"></i><i style="left:408px;width:51px;"></i><i class="last" style="left:459px;width:91px;padding-left:10px;letter-spacing:.25px;">05/01/2024</i></div>
<div class="rh" style="top:86px"></div>
<div class="row alt" style="top:86px"><i style="left:0px;width:132px;padding-left:3px;letter-spacing:-.55px;">P24030003001</i><i style="left:132px;width:61px;padding-left:3px;letter-spacing:-.3px;">EBAV</i><i style="left:193px;width:52px;"><span class="cb"><svg style="left:0;top:0" width="13" height="13" viewBox="0 0 13 13"><path d="M1.6 6.6 L5 10 L11.6 2.6" fill="none" stroke="#555" stroke-width="1.8"/></svg></span></i><i class="r" style="left:245px;width:61px;padding-right:3px;letter-spacing:-.35px;">1,000</i><i class="r" style="left:306px;width:61px;padding-right:3px;letter-spacing:-.35px;">1,000</i><i style="left:367px;width:41px;"></i><i style="left:408px;width:51px;"></i><i class="last" style="left:459px;width:91px;padding-left:10px;letter-spacing:.25px;">08/01/2024</i></div>
<div class="rh" style="top:106px"></div>
<div class="row" style="top:106px"><i style="left:0px;width:132px;padding-left:3px;letter-spacing:-.55px;">P24040001001</i><i style="left:132px;width:61px;padding-left:3px;letter-spacing:-.3px;">DEBIT</i><i style="left:193px;width:52px;"><span class="cb"><svg style="left:0;top:0" width="13" height="13" viewBox="0 0 13 13"><path d="M1.6 6.6 L5 10 L11.6 2.6" fill="none" stroke="#555" stroke-width="1.8"/></svg></span></i><i class="r" style="left:245px;width:61px;padding-right:3px;letter-spacing:-.35px;">8,000</i><i class="r" style="left:306px;width:61px;padding-right:3px;letter-spacing:-.35px;">1,000</i><i style="left:367px;width:41px;"></i><i style="left:408px;width:51px;"></i><i class="last" style="left:459px;width:91px;padding-left:10px;letter-spacing:.25px;">11/01/2024</i></div>
<div class="rh" style="top:126px"></div>
<div class="row alt" style="top:126px"><i style="left:0px;width:132px;padding-left:3px;letter-spacing:-.55px;"><b style="position:absolute;left:4px;top:5px;width:1.3px;height:10px;background:#3a3a3a"></b></i><i style="left:132px;width:61px;padding-left:3px;letter-spacing:-.3px;"></i><i style="left:193px;width:52px;"></i><i class="r" style="left:245px;width:61px;padding-right:3px;letter-spacing:-.35px;"></i><i class="r" style="left:306px;width:61px;padding-right:3px;letter-spacing:-.35px;"></i><i style="left:367px;width:41px;"></i><i style="left:408px;width:51px;"></i><i class="last" style="left:459px;width:91px;padding-left:10px;letter-spacing:.25px;">12/01/2024</i></div>
<div class="rh" style="top:146px"></div>
<div class="row" style="top:146px"><i style="left:0px;width:132px;padding-left:3px;letter-spacing:-.55px;"><b style="position:absolute;left:4px;top:5px;width:1.3px;height:10px;background:#3a3a3a"></b></i><i style="left:132px;width:61px;padding-left:3px;letter-spacing:-.3px;"></i><i style="left:193px;width:52px;"></i><i class="r" style="left:245px;width:61px;padding-right:3px;letter-spacing:-.35px;"></i><i class="r" style="left:306px;width:61px;padding-right:3px;letter-spacing:-.35px;"></i><i style="left:367px;width:41px;"></i><i style="left:408px;width:51px;"></i><i class="last" style="left:459px;width:91px;padding-left:10px;letter-spacing:.25px;">26/01/2024</i></div>
<div class="rh" style="top:166px"></div>
<div class="row alt" style="top:166px"><i style="left:0px;width:132px;padding-left:3px;letter-spacing:-.55px;"><b style="position:absolute;left:4px;top:5px;width:1.3px;height:10px;background:#3a3a3a"></b></i><i style="left:132px;width:61px;padding-left:3px;letter-spacing:-.3px;"></i><i style="left:193px;width:52px;"></i><i class="r" style="left:245px;width:61px;padding-right:3px;letter-spacing:-.35px;"></i><i class="r" style="left:306px;width:61px;padding-right:3px;letter-spacing:-.35px;"></i><i style="left:367px;width:41px;"></i><i style="left:408px;width:51px;"></i><i class="last" style="left:459px;width:91px;padding-left:10px;letter-spacing:.25px;">29/01/2024</i></div>
<div class="rh" style="top:186px"></div>
<div class="row" style="top:186px"><i style="left:0px;width:132px;padding-left:3px;letter-spacing:-.55px;"><b style="position:absolute;left:4px;top:5px;width:1.3px;height:10px;background:#3a3a3a"></b></i><i style="left:132px;width:61px;padding-left:3px;letter-spacing:-.3px;"></i><i style="left:193px;width:52px;"></i><i class="r" style="left:245px;width:61px;padding-right:3px;letter-spacing:-.35px;"></i><i class="r" style="left:306px;width:61px;padding-right:3px;letter-spacing:-.35px;"></i><i style="left:367px;width:41px;"></i><i style="left:408px;width:51px;"></i><i class="last" style="left:459px;width:91px;padding-left:10px;letter-spacing:.25px;">22/02/2024</i></div>
<div class="rh" style="top:206px"></div>
<div class="row alt" style="top:206px"><i style="left:0px;width:132px;padding-left:3px;letter-spacing:-.55px;"><b style="position:absolute;left:4px;top:5px;width:1.3px;height:10px;background:#3a3a3a"></b></i><i style="left:132px;width:61px;padding-left:3px;letter-spacing:-.3px;"></i><i style="left:193px;width:52px;"></i><i class="r" style="left:245px;width:61px;padding-right:3px;letter-spacing:-.35px;"></i><i class="r" style="left:306px;width:61px;padding-right:3px;letter-spacing:-.35px;"></i><i style="left:367px;width:41px;"></i><i style="left:408px;width:51px;"></i><i class="last" style="left:459px;width:91px;padding-left:10px;letter-spacing:.25px;">22/02/2024</i></div>
<div class="rh" style="top:226px"></div>
<div class="row" style="top:226px"><i style="left:0px;width:132px;padding-left:3px;letter-spacing:-.55px;"><b style="position:absolute;left:4px;top:5px;width:1.3px;height:10px;background:#3a3a3a"></b></i><i style="left:132px;width:61px;padding-left:3px;letter-spacing:-.3px;"></i><i style="left:193px;width:52px;"></i><i class="r" style="left:245px;width:61px;padding-right:3px;letter-spacing:-.35px;"></i><i class="r" style="left:306px;width:61px;padding-right:3px;letter-spacing:-.35px;"></i><i style="left:367px;width:41px;"></i><i style="left:408px;width:51px;"></i><i class="last" style="left:459px;width:91px;padding-left:10px;letter-spacing:.25px;">23/02/2024</i></div>
<div class="rh" style="top:246px"></div>
<div class="row alt" style="top:246px"><i style="left:0px;width:132px;padding-left:3px;letter-spacing:-.55px;"><b style="position:absolute;left:4px;top:5px;width:1.3px;height:10px;background:#3a3a3a"></b></i><i style="left:132px;width:61px;padding-left:3px;letter-spacing:-.3px;"></i><i style="left:193px;width:52px;"></i><i class="r" style="left:245px;width:61px;padding-right:3px;letter-spacing:-.35px;"></i><i class="r" style="left:306px;width:61px;padding-right:3px;letter-spacing:-.35px;"></i><i style="left:367px;width:41px;"></i><i style="left:408px;width:51px;"></i><i class="last" style="left:459px;width:91px;padding-left:10px;letter-spacing:.25px;">07/03/2024</i></div>
<div class="rh" style="top:266px"></div>
<div class="row" style="top:266px"><i style="left:0px;width:132px;padding-left:3px;letter-spacing:-.55px;"><b style="position:absolute;left:4px;top:5px;width:1.3px;height:10px;background:#3a3a3a"></b></i><i style="left:132px;width:61px;padding-left:3px;letter-spacing:-.3px;"></i><i style="left:193px;width:52px;"></i><i class="r" style="left:245px;width:61px;padding-right:3px;letter-spacing:-.35px;"></i><i class="r" style="left:306px;width:61px;padding-right:3px;letter-spacing:-.35px;"></i><i style="left:367px;width:41px;"></i><i style="left:408px;width:51px;"></i><i class="last" style="left:459px;width:91px;padding-left:10px;letter-spacing:.25px;">07/03/2024</i></div>
<div class="rh" style="top:286px"></div>
<div class="row alt" style="top:286px"><i style="left:0px;width:132px;padding-left:3px;letter-spacing:-.55px;"><b style="position:absolute;left:4px;top:5px;width:1.3px;height:10px;background:#3a3a3a"></b></i><i style="left:132px;width:61px;padding-left:3px;letter-spacing:-.3px;"></i><i style="left:193px;width:52px;"></i><i class="r" style="left:245px;width:61px;padding-right:3px;letter-spacing:-.35px;"></i><i class="r" style="left:306px;width:61px;padding-right:3px;letter-spacing:-.35px;"></i><i style="left:367px;width:41px;"></i><i style="left:408px;width:51px;"></i><i class="last" style="left:459px;width:91px;padding-left:10px;letter-spacing:.25px;">07/03/2024</i></div>
<div class="rh" style="top:306px"></div>
<div class="row" style="top:306px"><i style="left:0px;width:132px;padding-left:3px;letter-spacing:-.55px;"><b style="position:absolute;left:4px;top:5px;width:1.3px;height:10px;background:#3a3a3a"></b></i><i style="left:132px;width:61px;padding-left:3px;letter-spacing:-.3px;"></i><i style="left:193px;width:52px;"></i><i class="r" style="left:245px;width:61px;padding-right:3px;letter-spacing:-.35px;"></i><i class="r" style="left:306px;width:61px;padding-right:3px;letter-spacing:-.35px;"></i><i style="left:367px;width:41px;"></i><i style="left:408px;width:51px;"></i><i class="last" style="left:459px;width:91px;padding-left:10px;letter-spacing:.25px;">07/03/2024</i></div>
<div class="rh" style="top:326px"></div>
<div class="row alt" style="top:326px"><i style="left:0px;width:132px;padding-left:3px;letter-spacing:-.55px;"><b style="position:absolute;left:4px;top:5px;width:1.3px;height:10px;background:#3a3a3a"></b></i><i style="left:132px;width:61px;padding-left:3px;letter-spacing:-.3px;"></i><i style="left:193px;width:52px;"></i><i class="r" style="left:245px;width:61px;padding-right:3px;letter-spacing:-.35px;"></i><i class="r" style="left:306px;width:61px;padding-right:3px;letter-spacing:-.35px;"></i><i style="left:367px;width:41px;"></i><i style="left:408px;width:51px;"></i><i class="last" style="left:459px;width:91px;padding-left:10px;letter-spacing:.25px;">08/03/2024</i></div>
<div class="rh" style="top:346px"></div>
<div class="row" style="top:346px"><i style="left:0px;width:132px;padding-left:3px;letter-spacing:-.55px;"><b style="position:absolute;left:4px;top:5px;width:1.3px;height:10px;background:#3a3a3a"></b></i><i style="left:132px;width:61px;padding-left:3px;letter-spacing:-.3px;"></i><i style="left:193px;width:52px;"></i><i class="r" style="left:245px;width:61px;padding-right:3px;letter-spacing:-.35px;"></i><i class="r" style="left:306px;width:61px;padding-right:3px;letter-spacing:-.35px;"></i><i style="left:367px;width:41px;"></i><i style="left:408px;width:51px;"></i><i class="last" style="left:459px;width:91px;padding-left:10px;letter-spacing:.25px;">08/03/2024</i></div>
<div class="rh" style="top:366px"></div>
<div class="row alt" style="top:366px"><i style="left:0px;width:132px;padding-left:3px;letter-spacing:-.55px;"><b style="position:absolute;left:4px;top:5px;width:1.3px;height:10px;background:#3a3a3a"></b></i><i style="left:132px;width:61px;padding-left:3px;letter-spacing:-.3px;"></i><i style="left:193px;width:52px;"></i><i class="r" style="left:245px;width:61px;padding-right:3px;letter-spacing:-.35px;"></i><i class="r" style="left:306px;width:61px;padding-right:3px;letter-spacing:-.35px;"></i><i style="left:367px;width:41px;"></i><i style="left:408px;width:51px;"></i><i class="last" style="left:459px;width:91px;padding-left:10px;letter-spacing:.25px;">08/03/2024</i></div>
<div class="rh" style="top:386px"></div>
<div class="row" style="top:386px"><i style="left:0px;width:132px;padding-left:3px;letter-spacing:-.55px;"><b style="position:absolute;left:4px;top:5px;width:1.3px;height:10px;background:#3a3a3a"></b></i><i style="left:132px;width:61px;padding-left:3px;letter-spacing:-.3px;"></i><i style="left:193px;width:52px;"></i><i class="r" style="left:245px;width:61px;padding-right:3px;letter-spacing:-.35px;"></i><i class="r" style="left:306px;width:61px;padding-right:3px;letter-spacing:-.35px;"></i><i style="left:367px;width:41px;"></i><i style="left:408px;width:51px;"></i><i class="last" style="left:459px;width:91px;padding-left:10px;letter-spacing:.25px;">08/03/2024</i></div>
<div class="rh" style="top:406px"></div>
<div class="row alt" style="top:406px"><i style="left:0px;width:132px;padding-left:3px;letter-spacing:-.55px;"><b style="position:absolute;left:4px;top:5px;width:1.3px;height:10px;background:#3a3a3a"></b></i><i style="left:132px;width:61px;padding-left:3px;letter-spacing:-.3px;"></i><i style="left:193px;width:52px;"></i><i class="r" style="left:245px;width:61px;padding-right:3px;letter-spacing:-.35px;"></i><i class="r" style="left:306px;width:61px;padding-right:3px;letter-spacing:-.35px;"></i><i style="left:367px;width:41px;"></i><i style="left:408px;width:51px;"></i><i class="last" style="left:459px;width:91px;padding-left:10px;letter-spacing:.25px;">08/03/2024</i></div>
<div class="rh" style="top:426px"></div>
<div class="row" style="top:426px"><i style="left:0px;width:132px;padding-left:3px;letter-spacing:-.55px;"><b style="position:absolute;left:4px;top:5px;width:1.3px;height:10px;background:#3a3a3a"></b></i><i style="left:132px;width:61px;padding-left:3px;letter-spacing:-.3px;"></i><i style="left:193px;width:52px;"></i><i class="r" style="left:245px;width:61px;padding-right:3px;letter-spacing:-.35px;"></i><i class="r" style="left:306px;width:61px;padding-right:3px;letter-spacing:-.35px;"></i><i style="left:367px;width:41px;"></i><i style="left:408px;width:51px;"></i><i class="last" style="left:459px;width:91px;padding-left:10px;letter-spacing:.25px;">11/03/2024</i></div>
<div class="rh" style="top:446px"></div>
<div class="row alt" style="top:446px"><i style="left:0px;width:132px;padding-left:3px;letter-spacing:-.55px;"><b style="position:absolute;left:4px;top:5px;width:1.3px;height:10px;background:#3a3a3a"></b></i><i style="left:132px;width:61px;padding-left:3px;letter-spacing:-.3px;"></i><i style="left:193px;width:52px;"></i><i class="r" style="left:245px;width:61px;padding-right:3px;letter-spacing:-.35px;"></i><i class="r" style="left:306px;width:61px;padding-right:3px;letter-spacing:-.35px;"></i><i style="left:367px;width:41px;"></i><i style="left:408px;width:51px;"></i><i class="last" style="left:459px;width:91px;padding-left:10px;letter-spacing:.25px;">11/03/2024</i></div>
<div class="rh" style="top:466px"></div>
<div class="row" style="top:466px"><i style="left:0px;width:132px;padding-left:3px;letter-spacing:-.55px;"><b style="position:absolute;left:4px;top:5px;width:1.3px;height:10px;background:#3a3a3a"></b></i><i style="left:132px;width:61px;padding-left:3px;letter-spacing:-.3px;"></i><i style="left:193px;width:52px;"></i><i class="r" style="left:245px;width:61px;padding-right:3px;letter-spacing:-.35px;"></i><i class="r" style="left:306px;width:61px;padding-right:3px;letter-spacing:-.35px;"></i><i style="left:367px;width:41px;"></i><i style="left:408px;width:51px;"></i><i class="last" style="left:459px;width:91px;padding-left:10px;letter-spacing:.25px;">11/03/2024</i></div>
<div class="rh" style="top:486px"></div>
<div class="row alt" style="top:486px"><i style="left:0px;width:132px;padding-left:3px;letter-spacing:-.55px;"><b style="position:absolute;left:4px;top:5px;width:1.3px;height:10px;background:#3a3a3a"></b></i><i style="left:132px;width:61px;padding-left:3px;letter-spacing:-.3px;"></i><i style="left:193px;width:52px;"></i><i class="r" style="left:245px;width:61px;padding-right:3px;letter-spacing:-.35px;"></i><i class="r" style="left:306px;width:61px;padding-right:3px;letter-spacing:-.35px;"></i><i style="left:367px;width:41px;"></i><i style="left:408px;width:51px;"></i><i class="last" style="left:459px;width:91px;padding-left:10px;letter-spacing:.25px;">12/03/2024</i></div>
<div class="rh" style="top:506px"></div>
<div class="row" style="top:506px"><i style="left:0px;width:132px;padding-left:3px;letter-spacing:-.55px;"><b style="position:absolute;left:4px;top:5px;width:1.3px;height:10px;background:#3a3a3a"></b></i><i style="left:132px;width:61px;padding-left:3px;letter-spacing:-.3px;"></i><i style="left:193px;width:52px;"></i><i class="r" style="left:245px;width:61px;padding-right:3px;letter-spacing:-.35px;"></i><i class="r" style="left:306px;width:61px;padding-right:3px;letter-spacing:-.35px;"></i><i style="left:367px;width:41px;"></i><i style="left:408px;width:51px;"></i><i class="last" style="left:459px;width:91px;padding-left:10px;letter-spacing:.25px;">12/03/2024</i></div>
<div class="rh" style="top:526px"></div>
<div class="row alt end" style="top:526px"><i style="left:0px;width:132px;padding-left:3px;letter-spacing:-.55px;"><b style="position:absolute;left:4px;top:5px;width:1.3px;height:10px;background:#3a3a3a"></b></i><i style="left:132px;width:61px;padding-left:3px;letter-spacing:-.3px;"></i><i style="left:193px;width:52px;"></i><i class="r" style="left:245px;width:61px;padding-right:3px;letter-spacing:-.35px;"></i><i class="r" style="left:306px;width:61px;padding-right:3px;letter-spacing:-.35px;"></i><i style="left:367px;width:41px;"></i><i style="left:408px;width:51px;"></i><i class="last" style="left:459px;width:91px;padding-left:10px;letter-spacing:.25px;">12/03/2024</i></div>
<div class="abs" style="left:42px;top:26px;width:132px;height:21px;border:2px solid #000;background:#fff;font-size:14px;line-height:17px;padding-left:0px;letter-spacing:-.55px;box-shadow:1px 1px 0 #222">P24030001001</div>
</div>
</div>
<div class="abs" style="left:893px;top:187px;width:5px;height:455px;background:linear-gradient(90deg,rgba(0,0,0,.55),rgba(0,0,0,.28) 40%,rgba(0,0,0,.08) 75%,rgba(0,0,0,0));-webkit-mask-image:linear-gradient(180deg,transparent 0,#000 6px);mask-image:linear-gradient(180deg,transparent 0,#000 6px)"></div>
<div class="abs" style="left:503px;top:182px;width:4px;height:416px;background:#fff"></div>
<div id="menu" class="abs">
<div class="mi" style="top:3px;letter-spacing:-0.24px">Actualiser</div>
<div class="ms" style="top:34px"></div>
<div class="mi" style="top:40px;letter-spacing:-0.203px">Déclaration Manuelle (F1)</div>
<div class="mi" style="top:67px;letter-spacing:-0.083px">Déclaration Manuelle Complète (Maj+F1)</div>
<div class="mi" style="top:95px;letter-spacing:-0.091px">Déclaration Auto. Qté. Cond.</div>
<div class="mi" style="top:122px;letter-spacing:-0.267px">Déclaration Surplus</div>
<div class="mi" style="top:150px;letter-spacing:-0.23px">Déclaration Rebut</div>
<div class="mi" style="top:177px;letter-spacing:-0.18px">Déclaration Retour</div>
<div class="mi" style="top:205px;letter-spacing:-0.603px">Solde Etape</div>
<div class="ms" style="top:235px"></div>
<div class="mi hl" style="top:241px;letter-spacing:-0.122px">Ordonnancement (F11)</div>
<div class="mi" style="top:268px;letter-spacing:-0.158px">Reset Ordonnancement (Maj+F11)</div>
<div class="ms" style="top:299px"></div>
<div class="mi" style="top:304px;letter-spacing:-0.135px">Affectation RL<svg style="left:360px;top:9px" width="6" height="10" viewBox="0 0 6 10"><path d="M1 1 L5 5 L1 9" fill="none" stroke="#444" stroke-width="1.2"/></svg></div>
<div class="mi" style="top:332px;letter-spacing:-0.13px">Affectation Sous-Traitance<svg style="left:360px;top:9px" width="6" height="10" viewBox="0 0 6 10"><path d="M1 1 L5 5 L1 9" fill="none" stroke="#444" stroke-width="1.2"/></svg></div>
<div class="mi" style="top:359px;letter-spacing:0.123px">Affectation Substitution<svg style="left:360px;top:9px" width="6" height="10" viewBox="0 0 6 10"><path d="M1 1 L5 5 L1 9" fill="none" stroke="#444" stroke-width="1.2"/></svg></div>
<div class="ms" style="top:390px"></div>
<div class="mi" style="top:395px;letter-spacing:-0.239px">Informations Suivies (F3)</div>
<div class="ms" style="top:426px"></div>
<div class="mi" style="top:432px;letter-spacing:-0.07px">Déclaration Co-Produits</div>
</div>
<svg style="left:775px;top:437px" width="20" height="32" viewBox="0 0 20 32"><path d="M1.65 3.4 L1.65 23.1 L6.5 19 L10 27.6 Q11.3 29.3 12.9 28.5 Q14.4 27.6 13.7 26 L10.4 18.2 L16.3 17.9z" fill="none" stroke="#fff" stroke-width="3.6" stroke-linejoin="round"/><path d="M1.65 3.4 L1.65 23.1 L6.5 19 L10 27.6 Q11.3 29.3 12.9 28.5 Q14.4 27.6 13.7 26 L10.4 18.2 L16.3 17.9z" fill="#fff" stroke="#000" stroke-width="1.7" stroke-linejoin="miter"/></svg>
</body>
</html>
